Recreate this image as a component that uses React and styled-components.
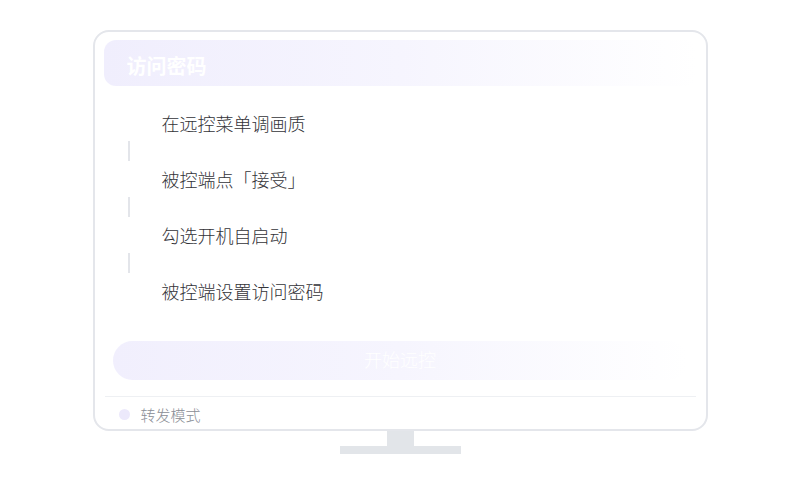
import styled, { createGlobalStyle } from 'styled-components';

const GlobalStyle = createGlobalStyle`
  html, body {
    margin: 0;
    padding: 0;
    background: #ffffff;
    font-family: "Noto Sans CJK SC", "Noto Sans", sans-serif;
  }
`;

const Root = styled.div`
  width: 800px;
  height: 500px;
  display: flex;
  flex-direction: column;
  align-items: center;
  padding-top: 30px;
  box-sizing: border-box;
`;

const Screen = styled.div`
  width: 615px;
  height: 401px;
  box-sizing: border-box;
  border: 2px solid #e4e6eb;
  border-radius: 16px;
  background: #fff;
  padding: 8px 9px 0;
  display: flex;
  flex-direction: column;
`;

const Header = styled.div`
  height: 46px;
  box-sizing: border-box;
  border-radius: 12px;
  background: linear-gradient(90deg, #f0eefd 0%, #f6f5fe 50%, #ffffff 100%);
  display: flex;
  align-items: center;
  padding: 4px 0 0 23px;
`;

const Title = styled.div`
  font-size: 20px;
  font-weight: 700;
  color: #ffffff;
`;

const Steps = styled.div`
  display: flex;
  flex-direction: column;
  margin-top: 19px;
  padding-left: 24px;
`;

const Step = styled.div`
  height: 36px;
  display: flex;
  align-items: center;
  padding-left: 34px;
  font-size: 18px;
  font-weight: 300;
  color: #333338;
`;

const Connector = styled.div`
  width: 2px;
  height: 20px;
  background: #e3e5ea;
`;

const StartButton = styled.div`
  margin: 32px 9px 0;
  height: 39px;
  box-sizing: border-box;
  padding-bottom: 3px;
  border-radius: 20px;
  background: linear-gradient(90deg, #f1effd 0%, #f6f5fe 50%, #ffffff 100%);
  display: flex;
  align-items: center;
  justify-content: center;
  font-size: 18px;
  font-weight: 300;
  color: #ffffff;
`;

const Divider = styled.div`
  height: 1px;
  margin: 16px 1px 0;
  background: #eef0f3;
`;

const Footer = styled.div`
  flex: 1;
  display: flex;
  align-items: center;
  gap: 11px;
  padding-left: 15px;
  padding-top: 2px;
`;

const Dot = styled.span`
  width: 11px;
  height: 11px;
  border-radius: 50%;
  background: #ece9fb;
`;

const FooterText = styled.span`
  font-size: 15px;
  font-weight: 300;
  color: #8a8d95;
`;

const Neck = styled.div`
  width: 27px;
  height: 15px;
  background: #e2e5e9;
`;

const Base = styled.div`
  width: 121px;
  height: 8px;
  background: #e2e5e9;
`;

const steps = ['在远控菜单调画质', '被控端点「接受」', '勾选开机自启动', '被控端设置访问密码'];

export default function App() {
  return (
    <Root>
      <GlobalStyle />
      <Screen>
        <Header>
          <Title>访问密码</Title>
        </Header>
        <Steps>
          {steps.map((text, i) => (
            <div key={text}>
              {i > 0 && <Connector />}
              <Step>{text}</Step>
            </div>
          ))}
        </Steps>
        <StartButton>开始远控</StartButton>
        <Divider />
        <Footer>
          <Dot />
          <FooterText>转发模式</FooterText>
        </Footer>
      </Screen>
      <Neck />
      <Base />
    </Root>
  );
}
